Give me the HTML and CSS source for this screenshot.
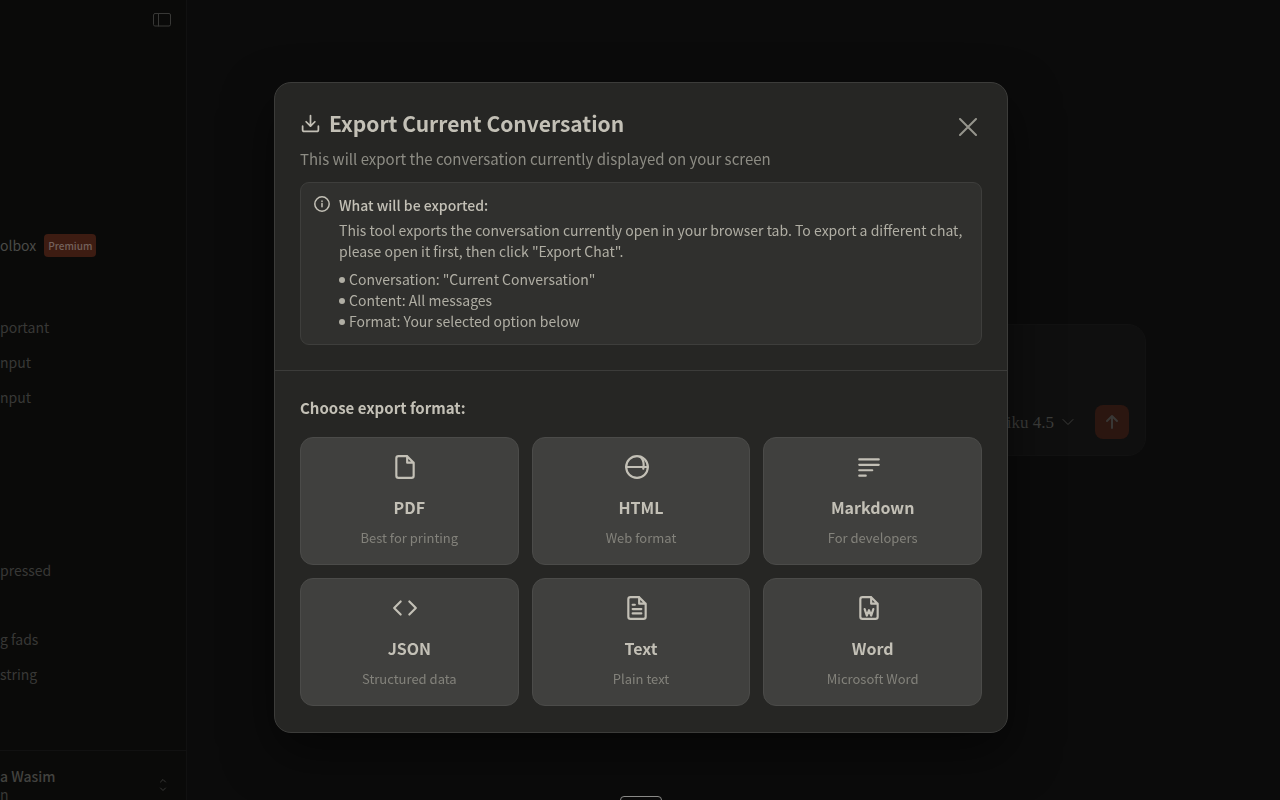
FILE: index.html
```html
<!DOCTYPE html>
<html lang="en">
<head>
<meta charset="utf-8">
<title>Export Current Conversation</title>
<link rel="stylesheet" href="styles.css">
</head>

<body>

<div class="app">
  <aside class="sidebar">
    <div class="sidebar-top">
      <button class="icon-button" type="button" aria-label="Toggle sidebar">
        <svg width="18" height="14" viewBox="0 0 18 14"><rect x="0.5" y="0.5" width="17" height="12.5" rx="1.5"/><path d="M5.5 0.5v12.5"/></svg>
      </button>
    </div>

    <nav class="sidebar-nav">
      <a class="nav-item toolbox" href="#">olbox <span class="badge">Premium</span></a>
      <div class="chat-group first">
        <a class="nav-item" href="#">portant</a>
        <a class="nav-item" href="#">nput</a>
        <a class="nav-item" href="#">nput</a>
      </div>
      <div class="chat-group second">
        <a class="nav-item" href="#">pressed</a>
      </div>
      <div class="chat-group third">
        <a class="nav-item" href="#">g fads</a>
        <a class="nav-item" href="#">string</a>
      </div>
    </nav>

    <button class="account" type="button">
      <span class="account-text">
        <span class="account-name">a Wasim</span>
        <span class="account-plan">n</span>
      </span>
      <svg width="8" height="14" viewBox="0 0 8 14"><path d="M1.5 4L4 1.5 6.5 4M1.5 10L4 12.5 6.5 10"/></svg>
    </button>
  </aside>

  <main class="main">
    <div class="composer">
      <button class="model-button" type="button">
        Haiku 4.5
        <svg width="12" height="8" viewBox="0 0 12 8"><path d="M1 1.5l5 5 5-5"/></svg>
      </button>
      <button class="send-button" type="button" aria-label="Send message">
        <svg width="14" height="16" viewBox="0 0 14 16"><path d="M7 14V2.5M2 7l5-5 5 5"/></svg>
      </button>
    </div>
  </main>
</div>

<div class="overlay">
  <section class="modal" role="dialog" aria-labelledby="modal-title">
    <header class="modal-header">
      <div class="title-row">
        <div>
          <h2 class="modal-title" id="modal-title">
            <svg width="21" height="21" viewBox="0 0 24 24"><path d="M21 15v4a2 2 0 0 1-2 2H5a2 2 0 0 1-2-2v-4M7 10l5 5 5-5M12 15V3"/></svg>
            Export Current Conversation
          </h2>
          <p class="subtitle">This will export the conversation currently displayed on your screen</p>
        </div>
        <button class="close-button" type="button" aria-label="Close">
          <svg width="18" height="18" viewBox="0 0 18 18"><path d="M1 1l16 16M17 1L1 17"/></svg>
        </button>
      </div>

      <div class="info-box">
        <svg width="16" height="16" viewBox="0 0 16 16"><circle cx="8" cy="8" r="7.2"/><path d="M8 7.6v3.2M8 5v0.4"/></svg>
        <div class="info-text">
          <h3>What will be exported:</h3>
          <p>This tool exports the conversation currently open in your browser tab. To export a different chat, please open it first, then click "Export Chat".</p>
          <ul>
            <li>Conversation: "Current Conversation"</li>
            <li>Content: All messages</li>
            <li>Format: Your selected option below</li>
          </ul>
        </div>
      </div>
    </header>

    <div class="modal-body">
      <h3 class="section-title">Choose export format:</h3>
      <div class="formats">
        <button class="format" type="button">
          <svg viewBox="0 0 24 24"><path d="M14 2H6a2 2 0 0 0-2 2v16a2 2 0 0 0 2 2h12a2 2 0 0 0 2-2V8zM14 2v6h6"/></svg>
          <span class="format-name">PDF</span>
          <span class="format-note">Best for printing</span>
        </button>
        <button class="format" type="button">
          <svg viewBox="0 0 24 24"><circle cx="12" cy="12" r="10"/><path d="M2 12h20M15 2.6c2.6 2 3.6 6.5 2.8 11"/></svg>
          <span class="format-name">HTML</span>
          <span class="format-note">Web format</span>
        </button>
        <button class="format" type="button">
          <svg viewBox="0 0 24 24"><path d="M3 5h18M3 10h18M3 15h12M3 20h6"/></svg>
          <span class="format-name">Markdown</span>
          <span class="format-note">For developers</span>
        </button>
        <button class="format" type="button">
          <svg viewBox="0 0 24 24"><path d="M16 18l6-6-6-6M8 6l-6 6 6 6"/></svg>
          <span class="format-name">JSON</span>
          <span class="format-note">Structured data</span>
        </button>
        <button class="format" type="button">
          <svg viewBox="0 0 24 24"><path d="M14 2H6a2 2 0 0 0-2 2v16a2 2 0 0 0 2 2h12a2 2 0 0 0 2-2V8zM14 2v6h6M16 13H8M16 17H8M10 9H8"/></svg>
          <span class="format-name">Text</span>
          <span class="format-note">Plain text</span>
        </button>
        <button class="format" type="button">
          <svg viewBox="0 0 24 24"><path d="M14 2H6a2 2 0 0 0-2 2v16a2 2 0 0 0 2 2h12a2 2 0 0 0 2-2V8zM14 2v6h6M8 13l2 6 2-5 2 5 2-6"/></svg>
          <span class="format-name">Word</span>
          <span class="format-note">Microsoft Word</span>
        </button>
      </div>
    </div>
  </section>
</div>

<div class="bottom-tab"></div>

</body>
</html>
```
FILE: styles.css
```css
* {
  box-sizing: border-box;
}

body {
  background-color: #0b0b0b;
  color: #c3c0b6;
  font-family: 'Noto Sans CJK SC', 'Noto Sans', sans-serif;
  font-size: 14px;
  line-height: 21px;
  margin: 0;
  overflow: hidden;
}

h2,
h3,
ul,
p {
  margin: 0;
  padding: 0;
}
ul {
  list-style-type: none;
}

a {
  color: inherit;
  text-decoration: none;
}

button {
  background: none;
  border: 0;
  color: inherit;
  cursor: pointer;
  font: inherit;
  padding: 0;
}

svg {
  display: block;
  fill: none;
  flex: none;
  stroke: currentColor;
  stroke-linecap: round;
  stroke-linejoin: round;
}


/* Page behind the dialog */
.app {
  display: flex;
  height: 100vh;
}

.sidebar {
  background-color: #0a0a09;
  border-right: 1px solid #111111;
  color: #383836;
  display: flex;
  flex: none;
  flex-direction: column;
  width: 187px;
}

.sidebar-top {
  display: flex;
  height: 40px;
  justify-content: flex-end;
  padding-right: 15px;
}

.sidebar-nav {
  padding-top: 188px;
}

.nav-item {
  align-items: center;
  display: flex;
  height: 35px;
}
.nav-item.toolbox {
  color: #4a4a48;
  gap: 8px;
}

.badge {
  background-color: #3d1c12;
  border-radius: 4px;
  color: #74625c;
  font-size: 10px;
  font-weight: 500;
  line-height: 23px;
  padding: 0 4px;
}

.chat-group.first {
  margin-top: 47px;
}
.chat-group.second {
  margin-top: 138px;
}
.chat-group.third {
  margin-top: 34px;
}

.account {
  align-items: flex-start;
  border-top: 1px solid #111111;
  display: flex;
  height: 50px;
  justify-content: space-between;
  line-height: 18px;
  margin-top: auto;
  padding: 16px 19px 0 0;
  text-align: left;
}
.account svg {
  margin-top: 11px;
}
.account-name,
.account-plan {
  display: block;
}
.account-name {
  color: #42423f;
  font-weight: 500;
}

.main {
  flex: 1;
  padding: 324px 134px 0;
}

.composer {
  align-items: flex-end;
  background-color: #0f0f0f;
  border: 1px solid #121212;
  border-radius: 18px;
  display: flex;
  gap: 21px;
  height: 132px;
  justify-content: flex-end;
  padding: 16px;
}

.model-button {
  align-items: center;
  color: #3c3c3a;
  display: flex;
  font-family: 'Liberation Serif', serif;
  font-size: 17px;
  gap: 8px;
  height: 34px;
}

.send-button {
  background-color: #2b1610;
  border-radius: 8px;
  color: #393735;
  height: 34px;
  padding-left: 10px;
  stroke-width: 2;
  width: 34px;
}

.bottom-tab {
  background-color: #0b0b0b;
  border: 1px solid #8a8a88;
  border-radius: 4px;
  bottom: -20px;
  height: 24px;
  left: 50%;
  margin-left: -20px;
  position: fixed;
  width: 42px;
}


/* Export dialog */
.overlay {
  align-items: center;
  display: flex;
  inset: 0;
  justify-content: center;
  padding: 14px 0 0 2px;
  position: fixed;
}

.modal {
  background-color: #262624;
  border: 1px solid #3c3c3a;
  border-radius: 17px;
  box-shadow: 0 20px 50px rgba(0, 0, 0, 0.5);
  max-width: 734px;
  width: 90%;
}

.modal-header {
  border-bottom: 1px solid #3c3c3a;
  padding: 25px;
}

.title-row {
  align-items: flex-start;
  display: flex;
  justify-content: space-between;
}

.modal-title {
  align-items: center;
  display: flex;
  font-size: 21px;
  font-weight: 600;
  gap: 8px;
  line-height: 30px;
}
.modal-title svg {
  margin-top: 2px;
  stroke-width: 2;
}

.subtitle {
  color: #8d8c84;
  font-size: 15px;
  line-height: 24px;
  margin-top: 9px;
}

.close-button {
  color: #96958d;
  height: 38px;
  padding-left: 5px;
  stroke-width: 2;
  width: 28px;
}

.info-box {
  background-color: #30302e;
  border: 1px solid #3e3e3c;
  border-radius: 9px;
  display: flex;
  gap: 9px;
  margin-top: 11px;
  padding: 12px 13px;
}
.info-box svg {
  margin-top: 1px;
  stroke-width: 1.5;
}

.info-text {
  color: #b0aea4;
}
.info-text h3 {
  color: #c3c0b6;
  font-size: 14px;
  font-weight: 500;
}
.info-text p {
  margin: 4px 0 7px;
}
.info-text li {
  align-items: center;
  display: flex;
  gap: 4px;
}
.info-text li::before {
  background-color: #b0aea4;
  border-radius: 50%;
  content: '';
  height: 6px;
  margin-top: 2px;
  width: 6px;
}

.modal-body {
  padding: 25px 25px 26px;
}

.section-title {
  font-size: 15px;
  font-weight: 600;
  line-height: 24px;
}

.formats {
  display: grid;
  gap: 13px;
  grid-template-columns: repeat(3, 1fr);
  margin-top: 17px;
}

.format {
  align-items: center;
  background-color: #40403e;
  border: 1px solid #4b4b49;
  border-radius: 13px;
  display: flex;
  flex-direction: column;
  padding: 16px;
}
.format:hover {
  background-color: #4a4a48;
}
.format svg {
  height: 26px;
  margin-right: 8px;
  stroke-width: 2;
  width: 26px;
}

.format-name {
  font-size: 16px;
  font-weight: 600;
  line-height: 24px;
  margin-top: 15px;
}

.format-note {
  color: #83827b;
  font-size: 13px;
  line-height: 20px;
  margin-top: 9px;
}
```
